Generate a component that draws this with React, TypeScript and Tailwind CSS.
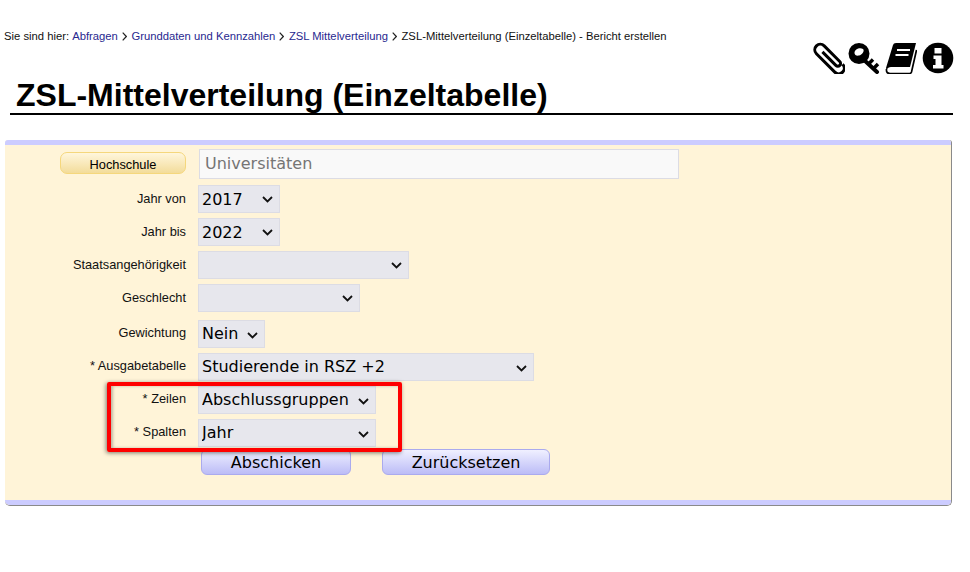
const sans = "font-['Liberation_Sans',Arial,sans-serif]"
const deja = "font-['DejaVu_Sans',sans-serif]"

function Sep() {
  return (
    <svg width="5" height="9" viewBox="0 0 5 9" className="ml-[4px] mr-[4.6px] inline-block" fill="none" stroke="#222" strokeWidth="1.2">
      <path d="M0.7 0.7 L4.3 4.5 L0.7 8.3" />
    </svg>
  )
}

function ClipIcon() {
  return (
    <svg width="32" height="32" viewBox="0 0 32 32" fill="none" stroke="#000" strokeWidth="3">
      <g transform="translate(16.500 17) rotate(-45)">
        <path d="M0 -10 L0 9 A2.75 2.75 0 0 0 5.5 9 L5.5 -13 A5.5 5.5 0 0 0 -5.5 -13 L-5.5 13 A5.5 5.5 0 0 0 5.5 13" />
      </g>
    </svg>
  )
}

function KeyIcon() {
  return (
    <svg width="32" height="32" viewBox="0 0 32 32">
      <path
        fillRule="evenodd"
        d="M11 1 A10.5 10.5 0 1 1 11 22 A10.5 10.5 0 1 1 11 1 Z M6.500 11 C6.500 7 12 5 15 7 C17 9 14 13 11 13.500 C8.500 14 6.500 13 6.500 11 Z"
      />
      <path d="M15 17 L29 30" stroke="#000" strokeWidth="4" strokeLinecap="round" />
      <path d="M20.500 22 L25 17.500 M25.500 26.500 L30 22" stroke="#000" strokeWidth="3.500" />
    </svg>
  )
}

function BookIcon() {
  return (
    <svg width="32" height="32" viewBox="0 0 32 32">
      <path d="M8 3 Q8.500 1 11 1 L31 1 L25 25 L6 25 Q3 25 1.500 28 L1 26 Z" />
      <path d="M1.500 27 Q1 31.500 5 31.500 L24.500 31.500 Q26 31.500 26.500 30 L31.500 8" fill="none" stroke="#000" strokeWidth="1.700" />
      <path d="M12 8 L25 8 M10.500 13 L23.500 13" stroke="#fff" strokeWidth="2" />
    </svg>
  )
}

function InfoIcon() {
  return (
    <svg width="32" height="32" viewBox="0 0 32 32">
      <circle cx="16" cy="16" r="15.300" />
      <path fill="#fff" d="M12.500 6 H19.500 V11.500 H12.500 Z M11.500 13.500 H19.500 V23 H21.500 V26.500 H11 V23 H13.500 V17 H11.500 Z" />
    </svg>
  )
}

interface RowProps {
  label: string
  value: string
  width: string
  upper?: boolean
}

function Row({ label, value, width, upper = false }: RowProps) {
  return (
    <div className="flex h-[28px] items-center">
      <label className={`w-[181px] text-right text-[12.8px] leading-none text-[#111] ${upper ? '' : 'mb-[2px]'}`}>{label}</label>
      <div className="relative ml-[12px]">
        <select
          defaultValue={value}
          className={`block h-[28px] ${width} appearance-none border border-[#dcdce4] bg-[#e7e7ed] pl-[3px] ${upper ? 'pt-[2px]' : ''} ${deja} text-[16px] text-black`}
        >
          <option value={value}>{value}</option>
        </select>
        <svg
          width="11"
          height="7"
          viewBox="0 0 11 7"
          fill="none"
          stroke="#111"
          strokeWidth="1.800"
          className={`pointer-events-none absolute right-[7px] ${upper ? 'top-[11px]' : 'top-[12px]'}`}
        >
          <path d="M1 1 L5.500 5.500 L10 1" />
        </svg>
      </div>
    </div>
  )
}

export default function App() {
  return (
    <div className={`relative h-[572px] w-[970px] overflow-hidden bg-white ${sans}`}>
      <div className="flex h-[72px] flex-col">
        <div className="mt-[29px] flex h-[14px] items-center pl-[4px] text-[11.25px] text-[#111]">
          Sie sind hier:&nbsp;
          <a className="text-[#28288f]">Abfragen</a>
          <Sep />
          <a className="text-[#28288f]">Grunddaten und Kennzahlen</a>
          <Sep />
          <a className="text-[#28288f]">ZSL Mittelverteilung</a>
          <Sep />
          ZSL-Mittelverteilung (Einzeltabelle) - Bericht erstellen
        </div>
        <div className="mr-[16px] mt-[-1px] flex items-center justify-end gap-[5px] text-black">
          <div className="mr-[-2px]">
            <ClipIcon />
          </div>
          <KeyIcon />
          <BookIcon />
          <InfoIcon />
        </div>
      </div>

      <h1 className="ml-[10px] mr-[17px] mt-[3px] h-[40px] border-b-2 border-black pl-[6px] text-[32px] font-bold leading-[41px] text-black">
        ZSL-Mittelverteilung (Einzeltabelle)
      </h1>

      <div className="ml-[5px] mr-[18px] mt-[25px] h-[366px] overflow-hidden rounded-b-[5px] rounded-t-[3px] border-r border-b border-[#8a8a8a] bg-[#fff4d8]">
        <div className="h-[5px] bg-[#ccccff]" />
        <div className="h-[355px]">
          <div className="box-content flex h-[30px] items-center pt-[4px]">
            <button className="mb-[2px] ml-[55px] h-[22px] w-[126px] rounded-[7px] border border-[#f5d77c] bg-gradient-to-b from-[#fff6dc] to-[#f3dc9a] pt-[2px] text-[12.8px] text-black">
              Hochschule
            </button>
            <div className={`ml-[13px] flex h-[30px] w-[480px] items-center border border-[#dcdce4] bg-[#f9f9f9] pl-[5px] ${deja} text-[16px] text-[#757575]`}>
              Universitäten
            </div>
          </div>
          <div className="mt-[6px] flex flex-col gap-[5px]">
            <Row label="Jahr von" value="2017" width="w-[82px]" upper />
            <Row label="Jahr bis" value="2022" width="w-[82px]" upper />
            <Row label="Staatsangehörigkeit" value="" width="w-[211px]" upper />
            <Row label="Geschlecht" value="" width="w-[162px]" upper />
          </div>
          <div className="mt-[8px] flex flex-col gap-[5px]">
            <Row label="Gewichtung" value="Nein" width="w-[67px]" />
            <Row label="* Ausgabetabelle" value="Studierende in RSZ +2" width="w-[336px]" />
            <Row label="* Zeilen" value="Abschlussgruppen" width="w-[178px]" />
            <Row label="* Spalten" value="Jahr" width="w-[178px]" />
          </div>
          <div className={`mt-[2px] flex ${deja} text-[16px] text-black [text-shadow:0_1px_1px_#fff]`}>
            <button className="ml-[196px] h-[26px] w-[150px] rounded-[6px] border border-[#aaaaee] bg-gradient-to-b from-[#f0f0ff] to-[#bcbcf6] pt-[1px]">
              Abschicken
            </button>
            <button className="ml-[31px] h-[26px] w-[168px] rounded-[6px] border border-[#aaaaee] bg-gradient-to-b from-[#f0f0ff] to-[#bcbcf6] pt-[1px]">
              Zurücksetzen
            </button>
          </div>
        </div>
        <div className="h-[5px] bg-[#ccccff]" />
      </div>

      <div className="absolute left-[107px] top-[382px] h-[70px] w-[295px] rounded-[2px] border-[4px] border-[#ff0000] shadow-[-1px_1px_4px_rgba(0,0,0,0.5),inset_2px_0_3px_rgba(0,0,0,0.25)]" />
    </div>
  )
}
